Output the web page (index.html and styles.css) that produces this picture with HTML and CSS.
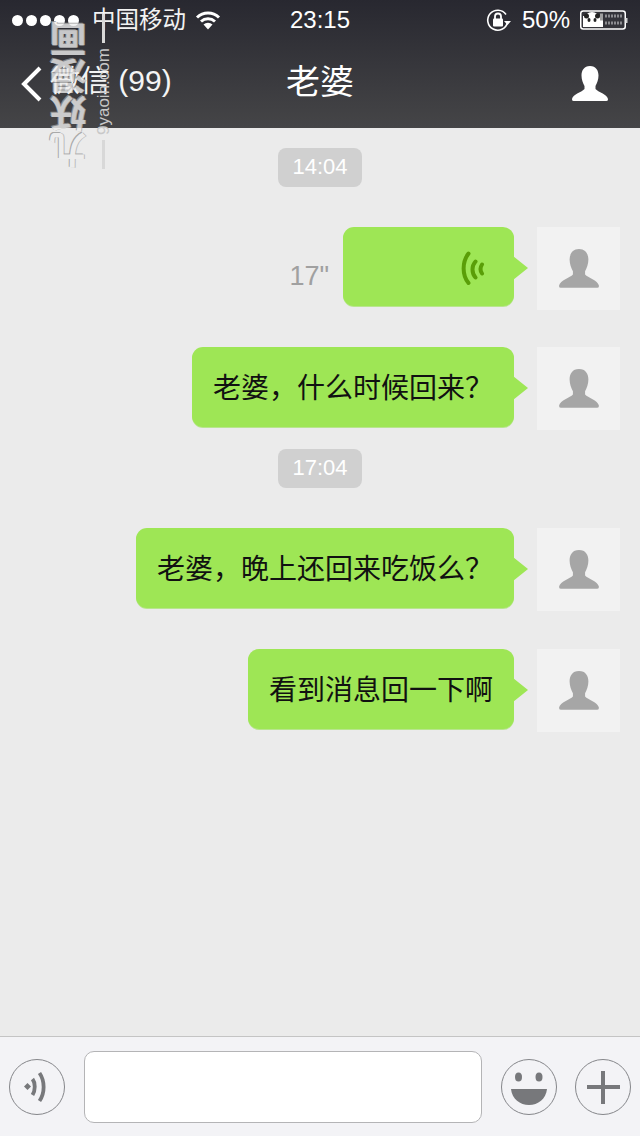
FILE: index.html
```html
<!DOCTYPE html>
<html lang="zh">
<head>
<meta charset="utf-8">
<title>老婆</title>
<link rel="stylesheet" href="styles.css">
</head>
<body>
<svg class="defs" width="0" height="0"><symbol id="person" viewBox="0 0 38 38"><path d="M19 1c-6 0-8.500 4.500-8.500 9.500 0 4 1.500 8 3 10.500v3C11 27 2 29 1 34q-.3 2 1.500 2h33q1.800 0 1.500-2C36 29 27 27 24.500 24v-3c1.500-2.500 3-6.500 3-10.500C27.500 5.500 25 1 19 1z"/></symbol></svg>
<div class="phone">
  <header class="top">
    <div class="status">
      <div class="status-left">
        <div class="dots"><i></i><i></i><i></i><i></i><i></i></div>
        <span class="carrier">中国移动</span>
        <svg class="wifi" width="26" height="20" viewBox="0 0 26 20"><path d="M2 7.500a16 16 0 0 1 22 0M6 11.500a10.500 10.500 0 0 1 14 0" fill="none" stroke="#fff" stroke-width="3"/><path d="M8.500 14.500a6.500 6.500 0 0 1 9 0L13 19.500z" fill="#fff"/></svg>
      </div>
      <span class="clock">23:15</span>
      <div class="status-right">
        <svg class="lock" width="26" height="26" viewBox="0 0 26 26"><path d="M22.500 15.500A10 10 0 1 1 21 7.500" fill="none" stroke="#fff" stroke-width="1.600"/><path d="M19 14h7l-3.500 4z" fill="#fff"/><rect x="8" y="11.500" width="10" height="8" rx="1" fill="#fff"/><path d="M10 12V9.500a3 3 0 0 1 6 0V12" fill="none" stroke="#fff" stroke-width="1.800"/></svg>
        <span class="percent">50%</span>
        <svg class="battery" width="48" height="20" viewBox="0 0 48 20">
          <rect x="0.750" y="1" width="44.500" height="18" rx="2.500" fill="#34343a" stroke="#fff" stroke-width="1.500"/>
          <rect x="3" y="6" width="20" height="11" fill="#fff"/>
          <path d="M5 8a7 6 0 0 1 14 0v3H5z" fill="#fff"/>
          <circle cx="6.500" cy="6" r="2.500" fill="#222"/><circle cx="17.500" cy="6" r="2.500" fill="#222"/>
          <ellipse cx="9" cy="10" rx="1.500" ry="2" fill="#222"/><ellipse cx="15" cy="10" rx="1.500" ry="2" fill="#222"/>
          <rect x="20" y="3.500" width="3" height="7" fill="#a0a0a0"/>
          <path d="M25 6h18M25 13h17" stroke="#8c8c90" stroke-width="3" stroke-dasharray="2 1"/>
          <rect x="45.500" y="8" width="2" height="5" fill="#d0d0d0"/>
        </svg>
      </div>
    </div>
    <nav class="nav">
      <div class="back">
        <svg width="24" height="38" viewBox="0 0 24 38"><path d="M20 3L4 19l16 16" fill="none" stroke="#fff" stroke-width="4"/></svg>
        <span class="back-label">微信 (99)</span>
      </div>
      <h1 class="title">老婆</h1>
      <svg class="person-white" width="38" height="38"><use href="#person"/></svg>
    </nav>
  </header>

  <main class="chat">
    <div class="time"><span>14:04</span></div>
    <div class="row row-voice">
      <span class="duration">17"</span>
      <div class="bubble bubble-voice">
        <svg width="26" height="36" viewBox="0 0 26 36"><path d="M7.500 4.500C1 13 1 26 7.500 34M14.500 12.500C10.500 17 10.500 24 14.500 28.500M21 15.500C19 18.500 19 21.500 21 24.500" fill="none" stroke="#5a9e08" stroke-width="4" stroke-linecap="round"/></svg>
      </div>
      <div class="avatar"><svg class="person-grey" width="42" height="42"><use href="#person"/></svg></div>
    </div>
    <div class="row">
      <div class="bubble">老婆，什么时候回来？</div>
      <div class="avatar"><svg class="person-grey" width="42" height="42"><use href="#person"/></svg></div>
    </div>
    <div class="time"><span>17:04</span></div>
    <div class="row">
      <div class="bubble">老婆，晚上还回来吃饭么？</div>
      <div class="avatar"><svg class="person-grey" width="42" height="42"><use href="#person"/></svg></div>
    </div>
    <div class="row">
      <div class="bubble">看到消息回一下啊</div>
      <div class="avatar"><svg class="person-grey" width="42" height="42"><use href="#person"/></svg></div>
    </div>
  </main>

  <footer class="composer">
    <div class="round"><svg width="56" height="56" viewBox="0 0 56 56"><path d="M15 27.500l3.500-3.500 3.500 3.500-3.500 3.500z" fill="#77787b"/><path d="M23.500 20c3 4 3 11 0 16M30.500 14c5.500 8 5.500 20 0 28" fill="none" stroke="#77787b" stroke-width="3.800"/></svg></div>
    <div class="input"></div>
    <div class="round round-smile"><svg width="56" height="56" viewBox="0 0 56 56"><ellipse cx="17.500" cy="18" rx="3.500" ry="4.500" fill="#77787b"/><ellipse cx="38" cy="18" rx="3.500" ry="4.500" fill="#77787b"/><path d="M10 30h36c-1 10-9 16-18 16S11 40 10 30z" fill="#77787b"/></svg></div>
    <div class="round"><svg width="56" height="56" viewBox="0 0 56 56"><path d="M28 12v33M12 28h33" stroke="#77787b" stroke-width="4"/></svg></div>
  </footer>

  <div class="watermark"><span class="wm-big">九妖漫画</span><span class="wm-small">9yaoin.com</span></div>
</div>
</body>
</html>
```

FILE: styles.css
```css
* { box-sizing: border-box; }
html, body { margin: 0; padding: 0; }
body { font-family: "Liberation Sans", "Noto Sans CJK SC", sans-serif; background: #ebebeb; }
.defs { position: absolute; }
.phone { position: relative; width: 640px; height: 1136px; display: flex; flex-direction: column; overflow: hidden; }

.top { height: 128px; flex: none; color: #fff; background: linear-gradient(#282830, #454547); }
.status { height: 40px; padding: 0 12px; display: grid; grid-template-columns: 1fr auto 1fr; align-items: center; }
.status-left { display: flex; align-items: center; }
.dots { display: flex; gap: 3px; width: 80px; }
.dots i { width: 11px; height: 11px; border-radius: 50%; background: #fff; }
.carrier { font-size: 23.500px; line-height: 40px; color: #f2f2f2; }
.wifi { margin-left: 9px; }
.clock { font-size: 24px; }
.status-right { display: flex; align-items: center; justify-content: flex-end; }
.lock { margin-right: 11px; }
.percent { font-size: 24px; margin-right: 10px; }
.battery { flex: none; }

.nav { height: 88px; padding: 0 31px 0 20px; position: relative; display: flex; align-items: center; justify-content: space-between; }
.back { display: flex; align-items: center; gap: 6px; font-size: 30px; color: #f4f4f4; }
.back-label { line-height: 38px; margin-bottom: 6px; }
.title { position: absolute; left: 0; right: 0; top: 20px; margin: 0; text-align: center; font-size: 34px; line-height: 44px; font-weight: 400; }
.person-white { fill: #fff; }
.person-grey { fill: #a6a6a6; }

.chat { flex: 1; padding-top: 20px; display: flex; flex-direction: column; }
.time { display: flex; justify-content: center; margin-bottom: 40px; }
.time span { width: 84px; height: 39px; border-radius: 8px; background: #d0d0d0; color: #fff; font-size: 22px; line-height: 37px; text-align: center; }
.row { display: flex; justify-content: flex-end; align-items: flex-start; gap: 23px; padding-right: 20px; margin-bottom: 38px; }
.row-voice { margin-bottom: 37px; }
.row + .time { margin-top: -19px; margin-bottom: 40px; }
.bubble { position: relative; height: 80px; padding: 0 21px; border-radius: 11px; background: #9ee655; box-shadow: 0 1px 0 #b8e58e; color: #111; font-size: 28px; line-height: 83px; white-space: nowrap; }
.bubble::after { content: ""; position: absolute; right: -14px; top: 29px; border-left: 15px solid #9ee655; border-top: 12px solid transparent; border-bottom: 12px solid transparent; }
.bubble-voice { width: 171px; height: 79px; display: flex; align-items: center; justify-content: flex-end; padding-right: 27px; }
.duration { margin-top: 32px; font-size: 27px; line-height: 34px; color: #a0a0a0; margin-right: -9px; }
.avatar { width: 83px; height: 83px; background: #f2f2f2; display: flex; align-items: center; justify-content: center; }

.composer { height: 100px; flex: none; background: #f3f3f6; border-top: 1px solid #c4c4c4; display: flex; align-items: flex-start; padding: 14px 9px 0 9px; }
.round { width: 56px; height: 56px; margin-top: 8px; border: 1.500px solid #85868a; border-radius: 50%; flex: none; display: flex; align-items: center; justify-content: center; }
.round svg { flex: none; }
.input { width: 398px; height: 72px; margin: 0 19px; background: #fff; border: 1.500px solid #b4b4b6; border-radius: 10px; flex: none; }
.round-smile { margin-right: 18px; }

.watermark { position: absolute; left: 52px; top: 14px; width: 60px; height: 155px; display: flex; gap: 3px; color: #eeeeee; pointer-events: none; }
.wm-big, .wm-small { writing-mode: vertical-rl; transform: rotate(180deg); white-space: nowrap; }
.wm-big { font-family: "Liberation Serif", "Noto Sans CJK SC", serif; font-size: 37px; line-height: 40px; font-weight: 700; opacity: 0.8; text-shadow: 1px 1px 0 #999999, -1px 0 0 #b0b0b0; align-self: flex-end; }
.wm-small { display: flex; align-items: center; gap: 5px; font-size: 17px; line-height: 18px; color: #c8c8c8; height: 100%; }
.wm-small::before, .wm-small::after { content: ""; flex: 1; width: 3px; background: #d8d8d8; }
```
